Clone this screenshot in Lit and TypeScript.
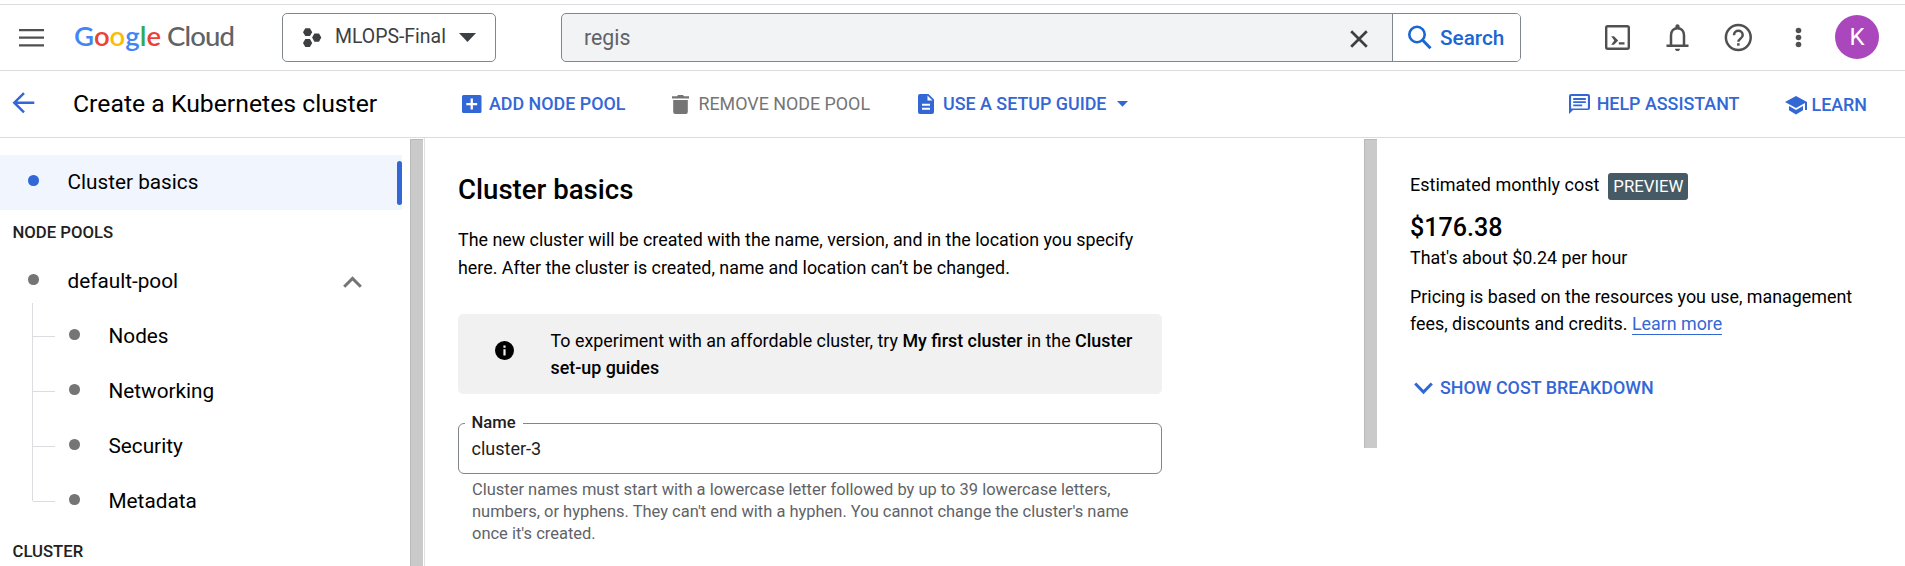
import { LitElement, html, css, svg } from "lit";
import { customElement } from "lit/decorators.js";

const ICONS = {
  menu: svg`<path d="M0 0h25v2.200H0zM0 7.600h25v2.200H0zM0 15.200h25v2.200H0z" />`,
  back: svg`<path d="M12 1.200 2.300 10.700l9.700 9.700M2.300 10.700h20" fill="none" stroke="currentColor" stroke-width="2.500" />`,
  add: svg`<path fill-rule="evenodd" d="M1.500 0h16.500a1.500 1.500 0 0 1 1.500 1.500v15a1.500 1.500 0 0 1-1.500 1.500H1.500A1.500 1.500 0 0 1 0 16.500v-15A1.500 1.500 0 0 1 1.500 0zM8.600 3.600v4.300H4.300v2.300h4.300v4.300h2.300v-4.300h4.300V7.900h-4.300V3.600z" />`,
  trash: svg`<path d="M0 1.200h5L6 0h5l1 1.200h5v2.200H0zM1.200 4.900h14.600v12a2 2 0 0 1-2 2H3.200a2 2 0 0 1-2-2z" />`,
  doc: svg`<path fill-rule="evenodd" d="M2 0h8.500L16 5.500V18a2 2 0 0 1-2 2H2a2 2 0 0 1-2-2V2a2 2 0 0 1 2-2zM9.500 1.500v5h5zM4 9.800v2h8v-2zM4 13.800v2h8v-2z" />`,
  chat: svg`<path fill-rule="evenodd" d="M2 0h17a2 2 0 0 1 2 2v12a2 2 0 0 1-2 2H4l-4 4V2a2 2 0 0 1 2-2zM2.100 2.100v12.300h16.800V2.100zM4.200 4h12.600v1.900H4.200zM4.200 7.200h12.600v1.900H4.200zM4.200 10.400h9v1.900h-9z" />`,
  cap: svg`<path d="M11 0l11 6v8h-2V7.100L11 12 0 6zM4 10l7 3.900L18 10v4.300L11 18.500 4 14.300z" />`,
};

const icon = (w: number, h: number, body: unknown, cls = "") =>
  html`<svg class=${cls} width=${w} height=${h} viewBox="0 0 ${w} ${h}">${body}</svg>`;

@customElement("app-root")
export class AppRoot extends LitElement {
  static styles = css`
    :host { display: block; width: 1905px; height: 566px; overflow: hidden; background: #fff; color: #000; font-family: Roboto, sans-serif; font-size: 17.87px; box-sizing: border-box; padding-top: 4px; }
    * { box-sizing: border-box; }
    svg { display: block; flex: none; fill: currentColor; }
    h1, h2, p { margin: 0; font-weight: 400; }
    .top { height: 67px; border-top: 1px solid #dadce0; border-bottom: 1px solid #dadce0; display: flex; align-items: flex-start; color: #505050; padding-left: 19px; }
    .menu { margin-top: 24px; }
    .logo { margin: 12px 0 0 31px; font-size: 27.500px; }
    .logo text { font-family: Lato, sans-serif; }
    .google { font-weight: 600; }
    .cloud { font-weight: 500; fill: #5f6368; }
    .picker { margin: 8px 0 0 47px; width: 214px; height: 49px; border: 1px solid #80868b; border-radius: 5px; display: flex; align-items: center; color: #3c4043; font-size: 19.46px; padding-left: 20px; }
    .picker span { margin: -2px 0 0 13px; width: 124px; line-height: 24px; }
    .search { margin: 8px 0 0 65px; width: 960px; height: 49px; border: 1px solid #80868b; border-radius: 5px; display: flex; background: #f1f3f4; overflow: hidden; }
    .query { flex: 1; padding: 12px 0 0 22px; font-size: 21.3px; line-height: 24px; color: #5f6368; }
    .clear { margin: 16px 24px 0 0; color: #3c4043; }
    .go { width: 128px; background: #fff; border-left: 1px solid #80868b; display: flex; color: #1967d2; font-weight: 500; font-size: 20.75px; padding: 11px 0 0 15px; gap: 8px; line-height: 26px; }
    .tools { display: flex; margin-left: auto; padding-right: 26px; }
    .avatar { width: 44px; height: 44px; border-radius: 50%; background: #ab47bc; color: #fff; display: grid; place-items: center; font-size: 24px; margin: 10px 0 0 15px; }
    .bar { height: 67px; border-bottom: 1px solid #dadce0; display: flex; align-items: flex-start; padding: 0 38px 0 12px; color: #3367d6; font-weight: 500; line-height: 24px; }
    .back { margin-top: 21px; }
    .bar h1 { font-size: 24.78px; color: #000; line-height: 30px; margin: 18px 0 0 37px; width: 389px; }
    .act { display: flex; align-items: center; gap: 7px; height: 24px; margin: 21px 0 0 0; white-space: nowrap; }
    .remove { color: #757575; font-weight: 400; margin-left: 47px; gap: 9px; }
    .guide { margin-left: 48px; gap: 9px; }
    .help { margin-left: auto; }
    .learn { margin: 22px 0 0 45px; gap: 5px; }
    .caret { margin-left: 2px; }
    .body { display: flex; height: 428px; }
    .side { width: 410px; padding-top: 17px; flex: none; }
    .row { height: 55px; width: 402px; display: flex; align-items: center; font-size: 20.75px; line-height: 24px; padding-left: 28px; }
    .dot { width: 10.500px; height: 10.500px; border-radius: 50%; background: #757575; margin: -4px 29px 0 0; flex: none; }
    .row span, .kid span { margin-top: -1px; }
    .on { background: #f0f5fe; }
    .on .dot { background: #3367d6; }
    .mark { width: 5px; height: 44px; border-radius: 3px; background: #3367d6; margin-left: auto; }
    .chev { margin: 0 40px 0 auto; color: #757575; }
    .group { height: 44px; padding: 12px 0 0 12.500px; font-size: 16.72px; line-height: 20px; font-weight: 500; color: #212121; }
    .kids { margin-left: 32px; display: grid; grid-template-columns: 1px auto; height: 220px; }
    .stem { background: #dadce0; height: 198px; margin-top: -6px; }
    .kid { height: 55px; display: flex; align-items: center; font-size: 20.75px; line-height: 24px; }
    .twig { width: 22px; height: 1px; background: #dadce0; margin: -1px 14px 0 0; flex: none; }
    .kid .dot { margin-right: 29px; }
    .scroll { width: 13px; margin-top: 1px; background: #cacaca; border-left: 1px solid #b9b9b9; border-top: 1px solid #b9b9b9; flex: none; }
    .short { height: 309px; }
    .main { width: 940px; flex: none; margin-left: 1px; border-left: 1px solid #e0e0e0; padding: 35px 0 0 33px; }
    .main h2 { font-size: 27.6px; font-weight: 500; line-height: 34px; }
    .lead { font-size: 17.86px; line-height: 28px; margin-top: 19px; white-space: nowrap; }
    .note { margin-top: 32px; width: 704px; height: 80px; border-radius: 5px; background: #f1f1f1; display: flex; align-items: center; padding-left: 37px; line-height: 27px; white-space: nowrap; color: #000; }
    .note p { margin: -1px 0 0 36.500px; }
    .note svg { margin-top: -8px; }
    b { font-weight: 500; }
    fieldset { margin: 18px 0 0; width: 704px; height: 62px; border: 1px solid #80868b; border-radius: 6px; padding: 0 0 0 12.500px; min-width: 0; }
    legend { margin-left: -7px; padding: 0 7px; font-size: 16.6px; line-height: 22px; font-weight: 500; color: #212121; }
    .value { line-height: 24px; margin-top: 3px; font-size: 18px; color: #212121; }
    .hint { margin: 5px 0 0 14px; font-size: 16.480px; line-height: 22px; color: #5f6368; white-space: nowrap; }
    .cost { padding: 33px 0 0 33px; white-space: nowrap; }
    .est { display: flex; line-height: 28px; font-size: 18px; height: 30px; }
    .badge { margin: 2px 0 0 9px; height: 27px; width: 80px; border-radius: 3px; background: #455a64; color: #fff; font-size: 16.8px; line-height: 27px; text-align: center; }
    .price { font-size: 25.1px; font-weight: 500; line-height: 30px; margin-top: 12px; }
    .hour { line-height: 24px; margin-top: 3px; }
    .terms { line-height: 27px; margin-top: 13px; }
    .more { color: #3367d6; border-bottom: 1px solid #3367d6; }
    .show { display: flex; color: #3367d6; font-weight: 500; line-height: 24px; margin-top: 39px; gap: 7px; padding-left: 4px; }
    .show svg { margin-top: 6px; }
  `;

  private kid(t: string) {
    return html`<div class="kid"><i class="twig"></i><i class="dot"></i><span>${t}</span></div>`;
  }

  render() {
    return html`
      <header class="top">
        ${icon(25, 18, ICONS.menu, "menu")}
        <svg class="logo" width="160" height="44">
          <text class="google" x="-1" y="29" textLength="87" lengthAdjust="spacing"><tspan fill="#4285f4">G</tspan><tspan fill="#ea4335">o</tspan><tspan fill="#fbbc04">o</tspan><tspan fill="#4285f4">g</tspan><tspan fill="#34a853">l</tspan><tspan fill="#ea4335">e</tspan></text>
          <text class="cloud" x="92" y="29" textLength="68" lengthAdjust="spacing">Cloud</text>
        </svg>
        <div class="picker">
          ${icon(19, 20, svg`<path d="M2.300.300h4.600L9.200 4.200 6.900 8.100H2.300L0 4.200zM2.300 11.100h4.600l2.300 3.900-2.300 3.900H2.300L0 15zM11.400 5.500h4.600l2.300 4.100-2.300 4.100h-4.600L9.100 9.600z" />`)}
          <span>MLOPS-Final</span>
          ${icon(17, 9, svg`<path d="M0 0h17L8.500 9z" />`)}
        </div>
        <div class="search">
          <div class="query">regis</div>
          ${icon(18, 18, svg`<path d="M1.200 1.200l15.600 15.600M16.800 1.200 1.200 16.800" stroke="currentColor" stroke-width="2.700" />`, "clear")}
          <div class="go">
            ${icon(24, 25, svg`<circle cx="9" cy="9.500" r="7.700" fill="none" stroke="currentColor" stroke-width="2.600" /><path d="M14.500 15l8 8.300" stroke="currentColor" stroke-width="3" />`)}
            <span>Search</span>
          </div>
        </div>
        <div class="tools">
          <svg width="220" height="60" viewBox="1600 5 220 60">
            <rect x="1606.200" y="26.200" width="22.600" height="22.600" rx="1.500" fill="none" stroke="currentColor" stroke-width="2.400" />
            <path d="M1611.200 36.200h2.800l4.200 4.300-4.200 4.300h-2.800l3.100-4.300zM1618.800 42.200h5.700v2.300h-5.700z" />
            <path d="M1671 46v-10.500c0-4.500 2.700-7.300 6.500-7.300s6.500 2.800 6.500 7.300V46" fill="none" stroke="currentColor" stroke-width="2.500" />
            <path d="M1666.500 44.500h22v2.400h-22zM1675 48.700h5c0 3.200-5 3.200-5 0zM1675.400 28v-1.600c0-2.800 4.200-2.800 4.200 0V28z" />
            <circle cx="1738.300" cy="37.500" r="12.400" fill="none" stroke="currentColor" stroke-width="2.500" />
            <path d="M1734 35.200c0-5.800 8.700-5.800 8.700 0 0 3.300-4.300 3.500-4.300 6.600" fill="none" stroke="currentColor" stroke-width="2.500" />
            <path d="M1737.100 43.200h2.500v2.500h-2.500z" />
            <circle cx="1798.500" cy="30.500" r="2.800" /><circle cx="1798.500" cy="37.500" r="2.800" /><circle cx="1798.500" cy="44.500" r="2.800" />
          </svg>
          <div class="avatar">K</div>
        </div>
      </header>
      <nav class="bar">
        ${icon(24, 22, ICONS.back, "back")}
        <h1>Create a Kubernetes cluster</h1>
        <div class="act">${icon(20, 18, ICONS.add)}ADD NODE POOL</div>
        <div class="act remove">${icon(17, 19, ICONS.trash)}REMOVE NODE POOL</div>
        <div class="act guide">${icon(16, 20, ICONS.doc)}USE A SETUP GUIDE${icon(11, 6, svg`<path d="M0 0h11L5.500 5.700z" />`, "caret")}</div>
        <div class="act help">${icon(21, 20, ICONS.chat)}HELP ASSISTANT</div>
        <div class="act learn">${icon(22, 19, ICONS.cap)}LEARN</div>
      </nav>
      <div class="body">
        <aside class="side">
          <div class="row on"><i class="dot"></i><span>Cluster basics</span><i class="mark"></i></div>
          <div class="group">NODE POOLS</div>
          <div class="row"><i class="dot"></i><span>default-pool</span>${icon(19, 12, svg`<path d="M1.200 10.800 9.500 2.400l8.300 8.400" fill="none" stroke="currentColor" stroke-width="3" />`, "chev")}</div>
          <div class="kids">
            <i class="stem"></i>
            <div>${["Nodes", "Networking", "Security", "Metadata"].map((t) => this.kid(t))}</div>
          </div>
          <div class="group">CLUSTER</div>
        </aside>
        <i class="scroll"></i>
        <main class="main">
          <h2>Cluster basics</h2>
          <p class="lead">The new cluster will be created with the name, version, and in the location you specify<br />here. After the cluster is created, name and location can’t be changed.</p>
          <div class="note">
            ${icon(19, 19, svg`<path fill-rule="evenodd" d="M9.500 0a9.500 9.500 0 1 1 0 19 9.500 9.500 0 0 1 0-19zM8.400 4.500v2.200h2.200V4.500zM8.400 8.300v6.200h2.200V8.300z" />`)}
            <p>To experiment with an affordable cluster, try <b>My first cluster</b> in the <b>Cluster<br />set-up guides</b></p>
          </div>
          <fieldset>
            <legend>Name</legend>
            <div class="value">cluster-3</div>
          </fieldset>
          <p class="hint">Cluster names must start with a lowercase letter followed by up to 39 lowercase letters,<br />numbers, or hyphens. They can't end with a hyphen. You cannot change the cluster's name<br />once it's created.</p>
        </main>
        <i class="scroll short"></i>
        <section class="cost">
          <div class="est">Estimated monthly cost<span class="badge">PREVIEW</span></div>
          <div class="price">$176.38</div>
          <div class="hour">That's about $0.24 per hour</div>
          <p class="terms">Pricing is based on the resources you use, management<br />fees, discounts and credits. <span class="more">Learn more</span></p>
          <div class="show">${icon(19, 13, svg`<path d="M1.200 1.500 9.500 10l8.300-8.500" fill="none" stroke="currentColor" stroke-width="3" />`)}SHOW COST BREAKDOWN</div>
        </section>
      </div>
    `;
  }
}
